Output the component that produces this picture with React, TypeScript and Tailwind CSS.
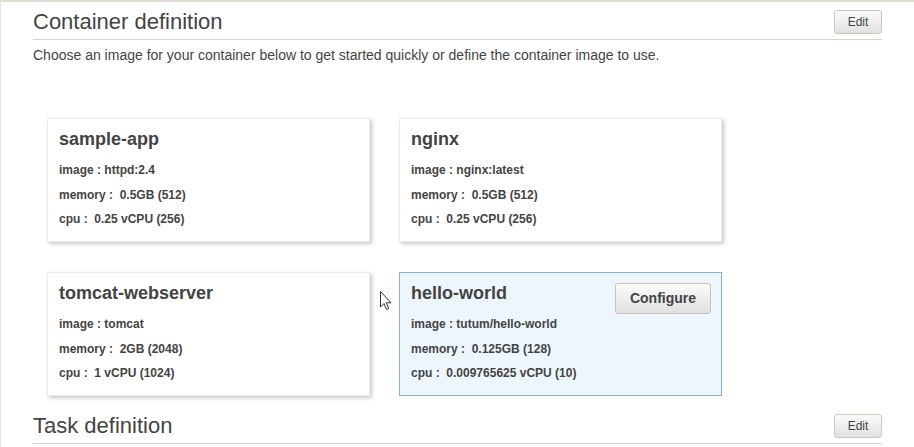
const font = { fontFamily: '"Liberation Sans", Arial, sans-serif' };

type Item = { name: string; image: string; memory: string; cpu: string; selected?: boolean };

const items: Item[] = [
  { name: "sample-app", image: "httpd:2.4", memory: "0.5GB (512)", cpu: "0.25 vCPU (256)" },
  { name: "nginx", image: "nginx:latest", memory: "0.5GB (512)", cpu: "0.25 vCPU (256)" },
  { name: "tomcat-webserver", image: "tomcat", memory: "2GB (2048)", cpu: "1 vCPU (1024)" },
  { name: "hello-world", image: "tutum/hello-world", memory: "0.125GB (128)", cpu: "0.009765625 vCPU (10)", selected: true },
];

function EditButton() {
  return (
    <button className="h-[24px] w-[48px] rounded-[3px] border border-[#cfc8bd] bg-gradient-to-b from-[#fbfbfb] to-[#e1e1e1] text-[12px] text-[#444]">
      Edit
    </button>
  );
}

function SectionHeader({ title }: { title: string }) {
  return (
    <div className="flex items-center justify-between border-b border-[#d9d3cb] pb-[5px] mr-[32px]">
      <h2 className="text-[22px] leading-[24px] text-[#444]">{title}</h2>
      <EditButton />
    </div>
  );
}

function Card({ item }: { item: Item }) {
  return (
    <div
      className={
        item.selected
          ? "relative h-[124px] border border-[#86b0dc] bg-[#eef6fd] pl-[11px] pt-[9px]"
          : "relative h-[124px] border border-[#ececec] bg-white pl-[11px] pt-[9px] shadow-[2px_2px_4px_rgba(0,0,0,0.22)]"
      }
    >
      <div className="text-[18px] font-bold leading-[22px] text-[#444]">{item.name}</div>
      <div className="mt-[8px] text-[12px] font-bold leading-[24.5px] text-[#444]">
        <div>image : {item.image}</div>
        <div>memory :&nbsp; {item.memory}</div>
        <div>cpu :&nbsp; {item.cpu}</div>
      </div>
      {item.selected && (
        <button className="absolute right-[10px] top-[10px] h-[31px] w-[96px] rounded-[3px] border border-[#cbc3b7] bg-gradient-to-b from-[#fbfbfb] to-[#e0e0e0] text-[14px] font-bold text-[#444]">
          Configure
        </button>
      )}
    </div>
  );
}

export default function App() {
  return (
    <div style={font} className="relative h-[447px] w-[914px] overflow-hidden border-l border-t-2 border-l-[#e6e6e6] border-t-[#e3dbcf] bg-white pl-[32px] pt-[8px]">
      <SectionHeader title="Container definition" />
      <p className="mt-[5px] text-[14px] leading-[20px] text-[#444]">
        Choose an image for your container below to get started quickly or define the container image to use.
      </p>
      <div className="ml-[14px] mt-[53px] grid w-[675px] grid-cols-[323px_323px] gap-x-[29px] gap-y-[30px]">
        {items.map((item) => (
          <Card key={item.name} item={item} />
        ))}
      </div>
      <div className="mt-[18px]">
        <SectionHeader title="Task definition" />
      </div>
      <svg className="absolute left-[379px] top-[289px]" width="13" height="21" viewBox="0 0 13 21">
        <path d="M0.5 0.5 L0.5 16 L4 12.5 L6.5 18.5 L8.8 17.5 L6.3 11.8 L11 11.8 Z" fill="white" stroke="#333" strokeWidth="1" strokeLinejoin="round" />
      </svg>
    </div>
  );
}
